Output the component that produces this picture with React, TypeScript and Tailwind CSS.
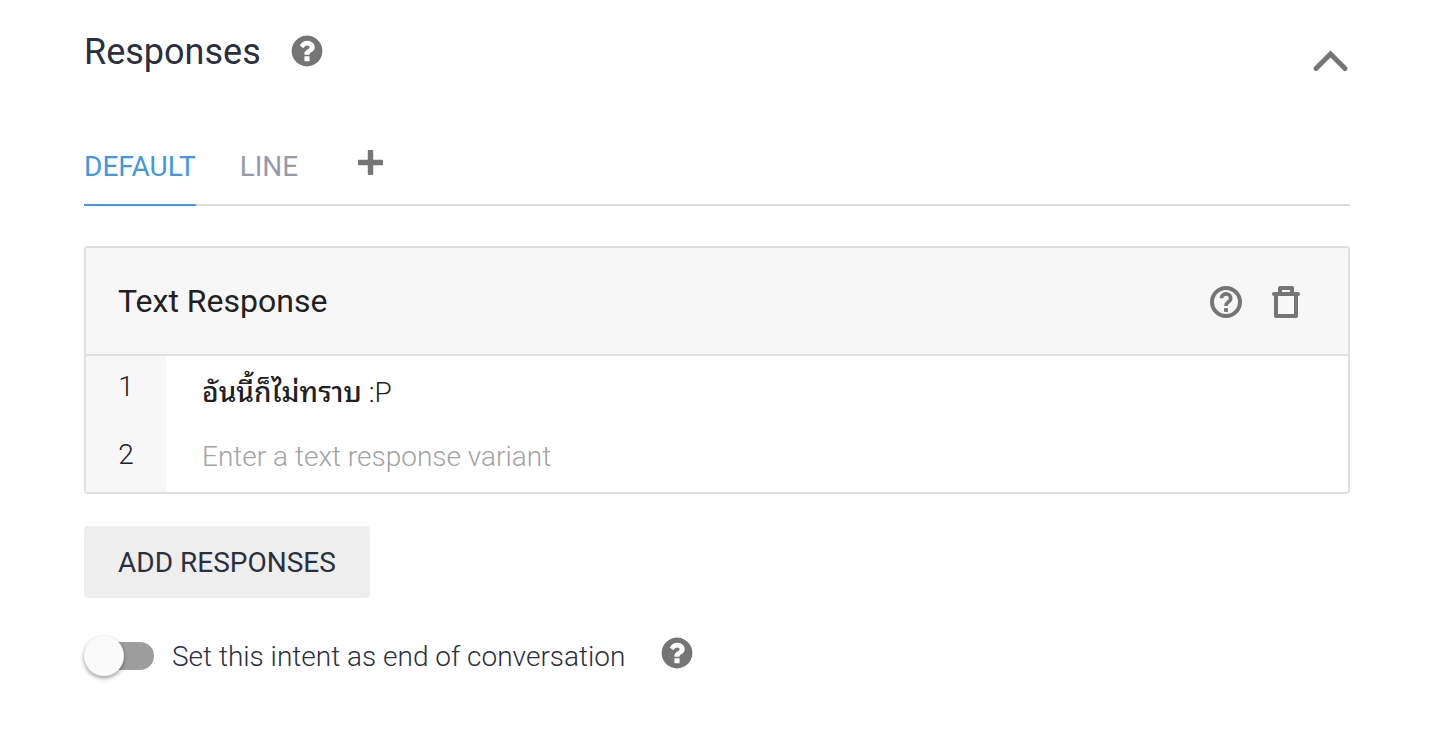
import { useState } from "react";

function HelpIcon() {
    return (
        <svg viewBox="0 0 1792 1792" className="size-9 fill-[#757575]" aria-hidden="true">
            <path d="M1024 1376v-192q0-14-9-23t-23-9h-192q-14 0-23 9t-9 23v192q0 14 9 23t23 9h192q14 0 23-9t9-23zm256-672q0-88-55.5-163t-138.5-116-170-41q-243 0-371 213-15 24 8 42l132 100q7 6 19 6 16 0 25-12 53-68 86-92 34-24 86-24 48 0 85.5 26t37.5 59q0 38-20 61t-68 45q-63 28-115.5 86.5t-52.5 125.5v36q0 14 9 23t23 9h192q14 0 23-9t9-23q0-19 21.5-49.5t54.5-49.5q32-18 49-28.5t46-35 44.5-48 28-60.5 12.5-81zm384 192q0 209-103 385.5t-279.5 279.5-385.5 103-385.5-103-279.5-279.5-103-385.5 103-385.5 279.5-279.5 385.5-103 385.5 103 279.5 279.5 103 385.5z" />
        </svg>
    );
}

function HelpOutlineIcon() {
    return (
        <svg viewBox="0 0 32 32" className="size-8" fill="none" stroke="#757575" aria-hidden="true">
            <circle cx="16" cy="16" r="14" strokeWidth="4" />
            <path d="M11.5 12.2a4.6 4.2 0 1 1 7.4 3.3c-1.6 1.2-3 1.7-3 4.5" strokeWidth="3.6" />
            <rect x="14" y="22" width="4" height="4" rx="1" fill="#757575" stroke="none" />
        </svg>
    );
}

function TrashIcon() {
    return (
        <svg viewBox="0 0 28 32" className="h-8 w-7" fill="none" stroke="#757575" strokeWidth="4" strokeLinejoin="round" aria-hidden="true">
            <path d="M4 8v22h20V8" />
            <path d="M2 8h24" strokeLinecap="round" />
            <path d="M8 8V2h12v6" />
        </svg>
    );
}

function Tab({ label, active, onClick }: { label: string; active: boolean; onClick: () => void }) {
    return (
        <button
            type="button"
            className={`-mb-0.5 border-b-2 pt-1.5 ${active ? "border-[#4298e0] text-[#4298e0]" : "border-transparent text-[#959aa9]"}`}
            onClick={onClick}
        >
            {label}
        </button>
    );
}

export default function App() {
    const [open, setOpen] = useState(true);
    const [tab, setTab] = useState("default");
    const [variants, setVariants] = useState(["อันนี้ก็ไม่ทราบ :P", ""]);
    const [endConversation, setEndConversation] = useState(false);

    function updateVariant(index: number, value: string) {
        setVariants(variants.map((v, i) => (i === index ? value : v)));
    }

    return (
        <main className="min-h-screen bg-white px-[84px] py-6 font-['Roboto','Noto_Sans',sans-serif] text-[28px] text-[#2b303e]">
            <header className="flex items-center justify-between">
                <div className="flex items-center gap-7">
                    <h2 className="text-4xl leading-[56px]">Responses</h2>
                    <button type="button" aria-label="About responses" className="pb-0.5">
                        <HelpIcon />
                    </button>
                </div>
                <button type="button" aria-label="Toggle responses" aria-expanded={open} className="mt-[18px]" onClick={() => setOpen(!open)}>
                    <svg viewBox="0 0 40 24" className="h-6 w-10" fill="none" stroke="#757575" strokeWidth="5" strokeLinecap="round" aria-hidden="true">
                        <path d="M6 19.5 20.5 5 35 19.5" />
                    </svg>
                </button>
            </header>

            {open && (
                <>
                    <nav className="mt-11 flex h-[82px] gap-11 border-b-2 border-[#dcdcdc]">
                        <Tab label="DEFAULT" active={tab === "default"} onClick={() => setTab("default")} />
                        <Tab label="LINE" active={tab === "line"} onClick={() => setTab("line")} />
                        <button type="button" aria-label="Add integration" className="ml-4 pb-1">
                            <svg viewBox="0 0 26 26" className="size-[26px] fill-[#757575]" aria-hidden="true">
                                <rect x="9.8" y="1" width="5.4" height="25" rx="1" />
                                <rect y="10.8" width="25" height="5.4" rx="1" />
                            </svg>
                        </button>
                    </nav>

                    <section className="mt-10 overflow-hidden rounded border-2 border-[#dfe0e0]">
                        <div className="flex h-[108px] items-center justify-between border-b-2 border-[#dfe0e0] bg-[#f7f7f7] pr-12 pl-8">
                            <h3 className="text-[32px] text-[#212121]">Text Response</h3>
                            <div className="flex gap-[30px] pt-0.5">
                                <button type="button" aria-label="About text response">
                                    <HelpOutlineIcon />
                                </button>
                                <button type="button" aria-label="Delete text response">
                                    <TrashIcon />
                                </button>
                            </div>
                        </div>
                        <ol className="font-light text-[#212121]">
                            {variants.map((variant, i) => (
                                <li key={i} className="flex h-[68px]">
                                    <label htmlFor={`variant-${i}`} className="w-20 bg-[#f7f7f7] pt-2 text-center leading-[46px]">
                                        {i + 1}
                                    </label>
                                    {/* Light Latin letters with medium Thai ones */}
                                    <input
                                        id={`variant-${i}`}
                                        type="text"
                                        value={variant}
                                        placeholder="Enter a text response variant"
                                        className="min-w-0 grow px-9 pt-1.5 font-['Roboto_Light','Roboto','Noto_Sans_Thai_Looped','Noto_Looped_Thai','Loma','Garuda','Waree',sans-serif] leading-[60px] font-medium outline-none placeholder-shown:pt-0 placeholder-shown:pb-0.5 placeholder-shown:font-light placeholder:text-[#a3a3a3]"
                                        onChange={(e) => updateVariant(i, e.target.value)}
                                    />
                                </li>
                            ))}
                        </ol>
                    </section>

                    <button type="button" className="mt-8 h-[72px] rounded bg-[#eeeeee] px-[34px] pt-0.5">
                        ADD RESPONSES
                    </button>

                    <div className="mt-9 flex items-center gap-[34px]">
                        <label className="flex items-center gap-[18px] font-light">
                            <input
                                type="checkbox"
                                role="switch"
                                checked={endConversation}
                                onChange={(e) => setEndConversation(e.target.checked)}
                                className="ml-1 flex h-7 w-[66px] appearance-none items-center rounded-full bg-[#9e9e9e] before:-ml-1 before:size-10 before:rounded-full before:bg-[#fafafa] before:shadow-[0_2px_4px_rgba(0,0,0,0.4)] checked:bg-[#90c3ec] checked:before:ml-[30px] checked:before:bg-[#4298e0]"
                            />
                            <span className="pt-0.5">Set this intent as end of conversation</span>
                        </label>
                        <button type="button" aria-label="About end of conversation" className="-mt-1.5">
                            <HelpIcon />
                        </button>
                    </div>
                </>
            )}
        </main>
    );
}
